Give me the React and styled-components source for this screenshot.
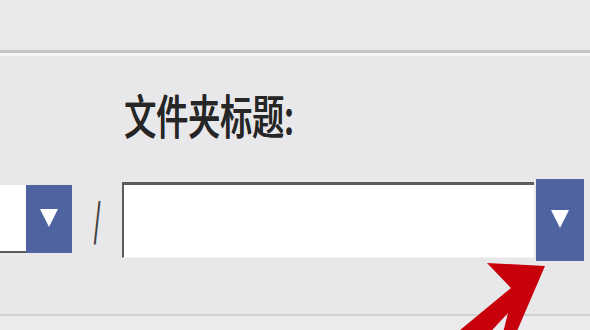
import React from "react";
import styled, { createGlobalStyle } from "styled-components";

const Global = createGlobalStyle`
  html, body {
    margin: 0;
    padding: 0;
    background: #e8e7ea;
  }
`;

export default function App() {
  return (
    <>
      <Global />
      <Page>
        <TopStrip />
        <Divider />
        <Label>文件夹标题:</Label>
        <FieldRow>
          <SmallSelect>
            <SmallInput />
            <DropButton $w={46} $h={68}>
              <Caret />
            </DropButton>
          </SmallSelect>
          <Slash>/</Slash>
          <Field />
          <DropButton $w={48} $h={82}>
            <Caret />
          </DropButton>
        </FieldRow>
        <Footer />
        <Arrow viewBox="440 255 150 75" width="150" height="75">
          <polygon
            points="545,266 487,263 511,288 448,340 483,340 508,313 500,345 511,345"
            fill="#c8000b"
          />
        </Arrow>
      </Page>
    </>
  );
}

const Page = styled.div`
  position: relative;
  width: 590px;
  height: 330px;
  overflow: hidden;
  display: flex;
  flex-direction: column;
  background: #e8e7ea;
  font-family: "Noto Sans CJK SC", "Noto Sans", sans-serif;
`;

const TopStrip = styled.div`
  height: 50px;
  background: #e9e8eb;
`;

const Divider = styled.div`
  height: 3px;
  background: #c5c4c7;
  border-bottom: 3px solid #f6f6f7;
`;

const Label = styled.div`
  margin: 34px 0 0 124px;
  font-size: 32px;
  line-height: 32px;
  height: 32px;
  font-weight: 500;
  color: #262626;
  transform: scaleY(1.45);
  transform-origin: top left;
  white-space: nowrap;
  text-shadow: 0.4px 0 0 #262626;
`;

const FieldRow = styled.div`
  margin-top: 57px;
  padding-right: 6px;
  height: 82px;
  display: flex;
  align-items: center;
`;

const SmallSelect = styled.div`
  display: flex;
  height: 68px;
  width: 72px;
  margin-top: -2px;
`;

const SmallInput = styled.div`
  width: 26px;
  background: #ffffff;
  border-bottom: 2px solid #5a5a5a;
  box-sizing: border-box;
`;

const DropButton = styled.div`
  width: ${(p) => p.$w}px;
  height: ${(p) => p.$h}px;
  flex: none;
  background: #4e63a0;
  display: flex;
  align-items: center;
  justify-content: center;
`;

const Caret = styled.div`
  width: 0;
  height: 0;
  border-left: 9px solid transparent;
  border-right: 9px solid transparent;
  border-top: 18px solid #ffffff;
  margin-top: -2px;
`;

const Slash = styled.div`
  width: 50px;
  text-align: center;
  font-family: "Liberation Sans", sans-serif;
  font-size: 60px;
  line-height: 60px;
  color: #3e3e3e;
  transform: scaleX(0.4);
  margin-top: 8px;
`;

const Field = styled.div`
  flex: 1;
  height: 76px;
  margin-right: 2px;
  box-sizing: border-box;
  background: #ffffff;
  border-top: 3px solid #5c5c5c;
  border-left: 2px solid #5c5c5c;
  border-bottom: 1px solid #f2f2f2;
`;

const Footer = styled.div`
  margin-top: auto;
  height: 14px;
  background: #ebeaec;
  border-top: 2px solid #d2d1d4;
`;

const Arrow = styled.svg`
  position: absolute;
  left: 440px;
  top: 255px;
`;
